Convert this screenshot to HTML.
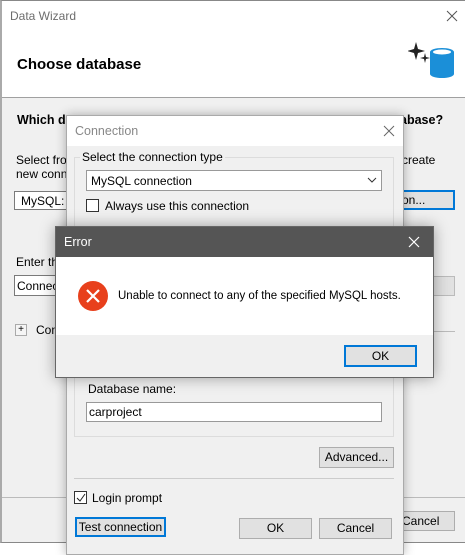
<!DOCTYPE html>
<html><head><meta charset="utf-8"><style>
*{margin:0;padding:0;box-sizing:border-box}
body{width:465px;height:546px;overflow:hidden;background:#fff;font-family:"Liberation Sans",sans-serif;font-size:12px;color:#000;position:relative}
.a{position:absolute;white-space:nowrap}
.btn{position:absolute;background:#e1e1e1;border:1px solid #adadad;text-align:center}
.blue{border:2px solid #0078d7}
.tb{position:absolute;background:#fff;border:1px solid #7a7a7a}
</style></head><body>
<!-- Data Wizard -->
<div class="a" style="left:0;top:0;width:465px;height:543px;background:#f0f0f0;border-left:2px solid #aaa;border-top:1px solid #888;border-bottom:1px solid #888"></div>
<div class="a" style="left:2px;top:1px;width:463px;height:97px;background:#fff;border-bottom:1px solid #a0a0a0"></div>
<div class="a" style="left:10px;top:9px;color:#6d6d6d;font-size:12px">Data Wizard</div>
<svg class="a" style="left:446px;top:10px" width="12" height="12"><path d="M1 1L11 11M11 1L1 11" stroke="#555" stroke-width="1"/></svg>
<div class="a" style="left:17px;top:56px;font-size:15px;font-weight:bold">Choose database</div>
<svg class="a" style="left:408px;top:40px" width="48" height="42"><path d="M8 2 L10 9 L17 11 L10 13 L8 20 L6 13 L-1 11 L6 9Z" fill="#222"/><path d="M17 13 L18 17 L22 18 L18 19 L17 23 L16 19 L12 18 L16 17Z" fill="#222"/><path d="M22 12 a12 4 0 0 1 24 0 v22 a12 4 0 0 1 -24 0z" fill="#1b8fd8"/><ellipse cx="34" cy="12" rx="9" ry="2.5" fill="#fff"/></svg>
<div class="a" style="left:17px;top:113px;font-weight:bold;font-size:12.5px">Which da</div>
<div class="a" style="left:400px;top:113px;font-weight:bold;font-size:12.5px">abase?</div>
<div class="a" style="left:16px;top:153px">Select from</div>
<div class="a" style="left:16px;top:167px">new conne</div>
<div class="a" style="left:402px;top:153px">create</div>
<div class="tb" style="left:14px;top:191px;width:60px;height:19px"></div>
<div class="a" style="left:21px;top:194px">MySQL: c</div>
<div class="btn blue" style="left:396px;top:190px;width:59px;height:20px;text-align:left;padding-left:4px;line-height:16px">on...</div>
<div class="a" style="left:16px;top:255px">Enter th</div>
<div class="tb" style="left:14px;top:275px;width:60px;height:21px"></div>
<div class="a" style="left:17px;top:279px">Connect</div>
<div class="a" style="left:400px;top:276px;width:55px;height:20px;background:#e1e1e1;border:1px solid #bbb"></div>
<div class="a" style="left:15px;top:324px;width:12px;height:12px;border:1px solid #aaa;background:#f5f5f5;font-size:10px;line-height:10px;text-align:center">+</div>
<div class="a" style="left:36px;top:323px">Con</div>
<div class="a" style="left:433px;top:331px;width:22px;height:1px;background:#bbb"></div>
<div class="a" style="left:2px;top:497px;width:463px;height:1px;background:#bbb"></div>
<div class="btn" style="left:398px;top:511px;width:57px;height:20px;line-height:18px;text-align:left;padding-left:3px">Cancel</div>
<!-- Connection -->
<div class="a" style="left:66px;top:115px;width:338px;height:440px;background:#f0f0f0;border:1px solid #aaa;box-shadow:0 0 10px rgba(0,0,0,.3)"></div>
<div class="a" style="left:67px;top:116px;width:336px;height:30px;background:#fff"></div>
<div class="a" style="left:75px;top:124px;color:#888;font-size:12.5px">Connection</div>
<svg class="a" style="left:383px;top:125px" width="12" height="12"><path d="M1 1L11 11M11 1L1 11" stroke="#666" stroke-width="1"/></svg>
<div class="a" style="left:74px;top:157px;width:320px;height:280px;border:1px solid #dcdcdc"></div>
<div class="a" style="left:80px;top:150px;background:#f0f0f0;padding:0 2px">Select the connection type</div>
<div class="tb" style="left:86px;top:170px;width:296px;height:21px;border-color:#999"></div>
<div class="a" style="left:91px;top:174px">MySQL connection</div>
<svg class="a" style="left:367px;top:177px" width="10" height="6"><path d="M1 1L5 5L9 1" stroke="#333" fill="none"/></svg>
<div class="a" style="left:86px;top:199px;width:13px;height:13px;border:1px solid #333;background:#fff"></div>
<div class="a" style="left:105px;top:199px">Always use this connection</div>
<div class="a" style="left:88px;top:382px">Database name:</div>
<div class="tb" style="left:86px;top:402px;width:296px;height:20px;border-color:#999"></div>
<div class="a" style="left:89px;top:405px">carproject</div>
<div class="btn" style="left:319px;top:447px;width:75px;height:21px;line-height:19px">Advanced...</div>
<div class="a" style="left:74px;top:478px;width:320px;height:1px;background:#ccc"></div>
<div class="a" style="left:74px;top:491px;width:13px;height:13px;border:1px solid #333;background:#fff"></div>
<svg class="a" style="left:76px;top:493px" width="10" height="10"><path d="M1 5L4 8L9 1" stroke="#222" fill="none"/></svg>
<div class="a" style="left:92px;top:491px">Login prompt</div>
<div class="btn blue" style="left:75px;top:517px;width:91px;height:20px;line-height:16px">Test connection</div>
<div class="btn" style="left:239px;top:518px;width:73px;height:21px;line-height:19px">OK</div>
<div class="btn" style="left:319px;top:518px;width:73px;height:21px;line-height:19px">Cancel</div>
<!-- Error -->
<div class="a" style="left:55px;top:226px;width:379px;height:152px;background:#f0f0f0;border:1px solid #666;box-shadow:0 0 14px rgba(0,0,0,.35)"></div>
<div class="a" style="left:56px;top:227px;width:377px;height:30px;background:#555"></div>
<div class="a" style="left:64px;top:235px;color:#fff;font-size:12.5px">Error</div>
<svg class="a" style="left:408px;top:236px" width="12" height="12"><path d="M1 1L11 11M11 1L1 11" stroke="#fff" stroke-width="1.2"/></svg>
<div class="a" style="left:56px;top:257px;width:377px;height:78px;background:#fff"></div>
<svg class="a" style="left:78px;top:281px" width="30" height="30"><circle cx="15" cy="15" r="15" fill="#e8401c"/><path d="M9 9 L21 21 M21 9 L9 21" stroke="#fff" stroke-width="2.2"/></svg>
<div class="a" style="left:118px;top:290px;font-size:11.5px">Unable to connect to any of the specified MySQL hosts.</div>
<div class="btn blue" style="left:344px;top:345px;width:73px;height:22px;line-height:18px">OK</div>
</body></html>
